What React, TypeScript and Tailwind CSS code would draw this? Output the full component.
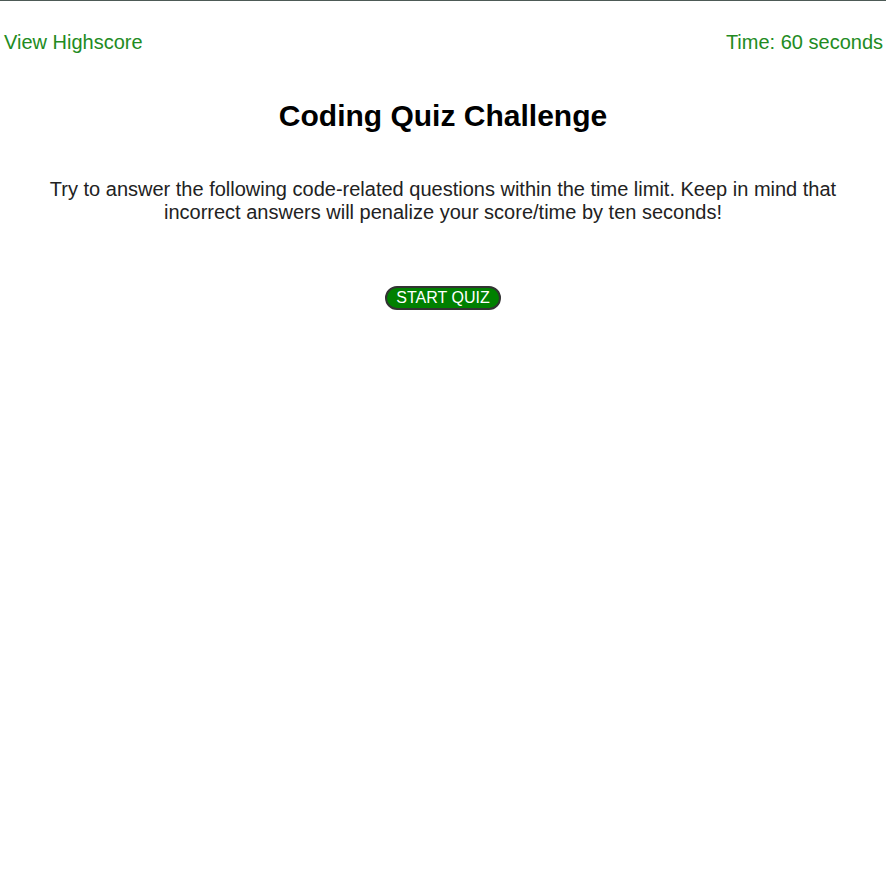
import React from "react";

export default function App() {
  return (
    <div
      className="min-h-[882px] bg-white border-t border-[#4d5a56]"
      style={{ fontFamily: '"Liberation Sans", Arial, sans-serif' }}
    >
      <header className="flex justify-between items-center pl-[4px] pr-[3px] pt-[30px] text-[20px] leading-[23px] text-[#228b22]">
        <span>View Highscore</span>
        <span>Time: 60 seconds</span>
      </header>
      <main className="flex flex-col items-center text-center">
        <h1 className="mt-[45px] text-[30px] leading-[34px] font-bold text-black">
          Coding Quiz Challenge
        </h1>
        <p className="mt-[45px] px-[40px] text-[20px] leading-[23px] text-[#222]">
          Try to answer the following code-related questions within the time limit. Keep in mind that
          <br />
          incorrect answers will penalize your score/time by ten seconds!
        </p>
        <button className="mt-[62px] h-[24px] px-[9px] rounded-full bg-[#008000] border-2 border-[#333] text-white text-[16px] leading-[18px]">
          START QUIZ
        </button>
      </main>
    </div>
  );
}
